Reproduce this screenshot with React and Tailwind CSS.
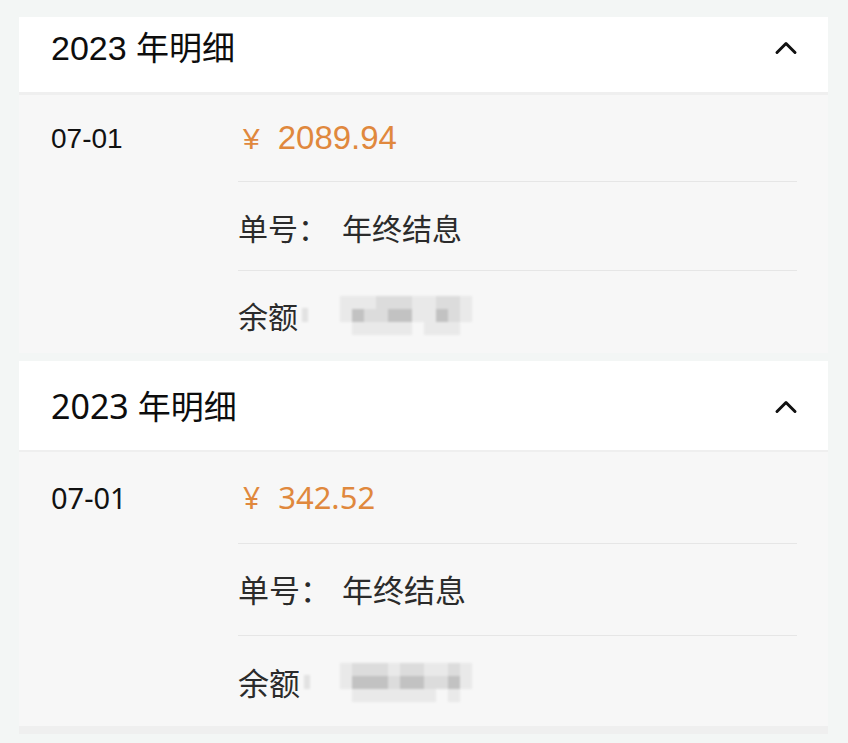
import { ChevronUp } from "lucide-react";

const shade = {
  0: "bg-transparent",
  1: "bg-[#e9e9e9]",
  2: "bg-[#dcdcdc]",
  3: "bg-[#c2c2c2]",
};

function Pixels({ rows }) {
  return (
    <div className="flex flex-col blur-[0.8px]">
      {rows.map((row, i) => (
        <div key={i} className="flex">
          {row.map((v, j) => (
            <div key={j} className={`w-[12px] h-[13px] ${shade[v]}`} />
          ))}
        </div>
      ))}
    </div>
  );
}

const firstPixels = [
  [1, 1, 1, 2, 2, 2, 1, 1, 2, 2, 1, 0],
  [1, 3, 2, 2, 3, 3, 1, 1, 3, 2, 1, 0],
  [0, 1, 1, 1, 1, 1, 0, 1, 1, 1, 0, 0],
];

const secondPixels = [
  [1, 2, 2, 2, 1, 2, 2, 1, 1, 2, 1],
  [1, 3, 3, 3, 2, 3, 3, 2, 2, 3, 1],
  [0, 1, 1, 1, 1, 1, 1, 1, 0, 1, 0],
];

function Section({ v, amount, pixels }) {
  const first = v === 1;
  const font = first
    ? "font-['Liberation_Sans','Noto_Sans_CJK_SC',sans-serif]"
    : "font-['Noto_Sans','Noto_Sans_CJK_SC',sans-serif]";

  return (
    <div className={font}>
      <div
        className={
          first
            ? "h-[75px] pb-[14px] bg-white flex items-center justify-between pl-[32px] pr-[24px]"
            : "h-[89px] pt-[2px] bg-white flex items-center justify-between pl-[32px] pr-[24px]"
        }
      >
        <div className="text-[34px] text-[#0d0d0d]">
          2023 <span className="font-['Noto_Sans_CJK_SC',sans-serif] text-[33px]">年明细</span>
        </div>
        <ChevronUp size={36} strokeWidth={2} className="text-[#111]" />
      </div>
      <div className={first ? "h-[3px] bg-[#efefef]" : "h-[2px] bg-[#efefef]"} />

      <div className="bg-[#f7f7f7] flex">
        <div className="w-[219px] pl-[32px]">
          <div
            className={
              first
                ? "h-[87px] flex items-center text-[28px] text-[#111]"
                : "h-[92px] flex items-center text-[29px] text-[#111]"
            }
          >
            07-01
          </div>
        </div>

        <div className="flex-1 pr-[31px] flex flex-col">
          <div
            className={
              first
                ? "h-[87px] flex items-center text-[33px] text-[#e0883d] border-b border-[#e6e6e6]"
                : "h-[92px] flex items-center text-[31px] text-[#e0883d] border-b border-[#e6e6e6]"
            }
          >
            <span className="ml-[5px] mr-[18px] text-[30px]">¥</span>
            {amount}
          </div>
          <div
            className={
              first
                ? "h-[89px] pt-[2px] flex items-center text-[30px] text-[#2b2b2b] border-b border-[#e6e6e6] font-['Noto_Sans_CJK_SC',sans-serif]"
                : "h-[92px] flex items-center text-[31px] text-[#2b2b2b] border-b border-[#e6e6e6] font-['Noto_Sans_CJK_SC',sans-serif]"
            }
          >
            <span>单号：</span>
            <span className={first ? "ml-[14px]" : "ml-[11px]"}>年终结息</span>
          </div>
          <div
            className={
              first
                ? "h-[82px] pt-[6px] flex items-center text-[30px] text-[#2b2b2b] font-['Noto_Sans_CJK_SC',sans-serif]"
                : "h-[90px] pt-[2px] flex items-center text-[31px] text-[#2b2b2b] font-['Noto_Sans_CJK_SC',sans-serif]"
            }
          >
            <span>余额</span>
            <div className="w-[6px] h-[14px] ml-[4px] bg-[#e2e2e2] blur-[1px]" />
            <div className={first ? "ml-[32px]" : "ml-[30px]"}>
              <Pixels rows={pixels} />
            </div>
          </div>
        </div>
      </div>
    </div>
  );
}

export default function App() {
  return (
    <div className="min-h-[743px] bg-[#f3f6f5] pt-[17px] pl-[19px] pr-[20px]">
      <Section v={1} amount="2089.94" pixels={firstPixels} />
      <div className="h-[8px]" />
      <Section v={2} amount="342.52" pixels={secondPixels} />
      <div className="h-[8px] bg-[#efefef]" />
    </div>
  );
}
